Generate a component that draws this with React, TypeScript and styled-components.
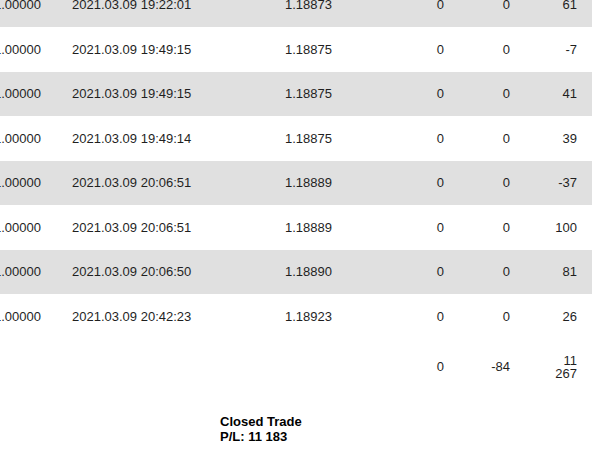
import React from 'react'
import styled, { createGlobalStyle } from 'styled-components'

const GlobalStyle = createGlobalStyle`
  html, body {
    margin: 0;
    padding: 0;
    background: #fff;
    overflow: hidden;
  }
  body {
    font-family: 'Liberation Sans', Arial, sans-serif;
    font-size: 13px;
    color: #1f1f1f;
  }
`

const Viewport = styled.div`
  width: 600px;
  height: 459px;
  overflow: hidden;
`

// the report is scrolled a little down and to the right
const Sheet = styled.div`
  width: 598px;
  margin: -17.5px 0 0 -6px;
`

const Row = styled.div<{ $shade?: boolean }>`
  display: grid;
  grid-template-columns: 78px 213px 95px 64px 66px 67px;
  align-items: center;
  height: 44.5px;
  padding-right: 15px;
  line-height: 13px;
  background: ${p => (p.$shade ? '#e0e0e0' : '#fff')};
`

const TotalRow = styled(Row)`
  height: auto;
  padding-top: 15px;
  padding-bottom: 15px;
  line-height: 13.5px;
`

const Cell = styled.div<{ $align?: 'left' | 'right' }>`
  text-align: ${p => p.$align || 'left'};
  white-space: nowrap;
`

const WrapCell = styled.div`
  display: flex;
  justify-content: flex-end;
`

const Narrow = styled.span`
  width: 24px;
  text-align: right;
`

const Summary = styled.div`
  padding: 18.5px 0 0 226px;
  font-weight: bold;
  line-height: 15px;
  color: #000;
`

const trades = [
  { time: '2021.03.09 19:22:01', price: '1.18873', profit: '61' },
  { time: '2021.03.09 19:49:15', price: '1.18875', profit: '-7' },
  { time: '2021.03.09 19:49:15', price: '1.18875', profit: '41' },
  { time: '2021.03.09 19:49:14', price: '1.18875', profit: '39' },
  { time: '2021.03.09 20:06:51', price: '1.18889', profit: '-37' },
  { time: '2021.03.09 20:06:51', price: '1.18889', profit: '100' },
  { time: '2021.03.09 20:06:50', price: '1.18890', profit: '81' },
  { time: '2021.03.09 20:42:23', price: '1.18923', profit: '26' }
]

export default function App() {
  return (
    <Viewport>
      <GlobalStyle />
      <Sheet>
        {trades.map((t, i) => (
          <Row key={i} $shade={i % 2 === 0}>
            <Cell>1.00000</Cell>
            <Cell>{t.time}</Cell>
            <Cell>{t.price}</Cell>
            <Cell $align="right">0</Cell>
            <Cell $align="right">0</Cell>
            <Cell $align="right">{t.profit}</Cell>
          </Row>
        ))}
        <TotalRow>
          <Cell />
          <Cell />
          <Cell />
          <Cell $align="right">0</Cell>
          <Cell $align="right">-84</Cell>
          <WrapCell>
            <Narrow>11 267</Narrow>
          </WrapCell>
        </TotalRow>
        <Summary>
          <div>Closed Trade</div>
          <div>P/L: 11 183</div>
        </Summary>
      </Sheet>
    </Viewport>
  )
}
